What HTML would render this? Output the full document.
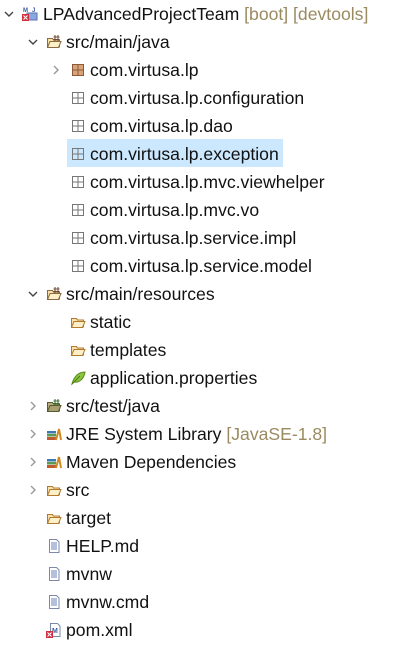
<!DOCTYPE html>
<html><head><style>
body{margin:0;width:409px;height:648px;background:#fff;overflow:hidden;font-family:"Liberation Sans",sans-serif;font-size:17.6px;color:#111;position:relative}
.r{position:absolute;height:28px;line-height:28px;white-space:nowrap}
.t{position:absolute;top:0}
.g{color:#9a8a60}
.ch{position:absolute;top:9px;width:10px;height:10px}
.ic{position:absolute;top:6px;width:16px;height:16px}
.hl{position:absolute;left:67px;top:139px;width:216px;height:28px;background:#cce8ff}
</style></head><body>
<div class="hl"></div>
<svg width="0" height="0" style="position:absolute">
<defs>
<symbol id="down" viewBox="0 0 10 10"><path d="M1 3 L5 7 L9 3" fill="none" stroke="#444" stroke-width="1.4"/></symbol>
<symbol id="right" viewBox="0 0 10 10"><path d="M3 1 L7 5 L3 9" fill="none" stroke="#999" stroke-width="1.4"/></symbol>
<symbol id="pkg" viewBox="0 0 16 16"><rect x="2.5" y="2.5" width="11" height="11" fill="none" stroke="#777"/><path d="M8 2.5V13.5M2.5 8H13.5" stroke="#777"/></symbol>
<symbol id="pkgf" viewBox="0 0 16 16"><rect x="2.5" y="2.5" width="11" height="11" fill="#d9a477" stroke="#8a5a3a"/><path d="M8 2.5V13.5M2.5 8H13.5" stroke="#8a5a3a"/></symbol>
<symbol id="fold" viewBox="0 0 16 16"><path d="M1.5 4.5h5l1 1.5h6v7h-12z" fill="#fbe2a8" stroke="#b07a30"/><path d="M1.5 13.5l2.5-6h11l-2.5 6z" fill="#fdf0c8" stroke="#b07a30"/></symbol>
<symbol id="sfold" viewBox="0 0 16 16"><path d="M1.5 4.5h5l1 1.5h6v7h-12z" fill="#fbe2a8" stroke="#8a6a40"/><path d="M1.5 13.5l2.5-6h11l-2.5 6z" fill="#fdf0c8" stroke="#8a6a40"/><path d="M9 1v6M12 1v6M7.5 3h6M7.5 5.5h6" stroke="#6a4a30"/></symbol>
<symbol id="tfold" viewBox="0 0 16 16"><path d="M1.5 4.5h5l1 1.5h6v7h-12z" fill="#b8b080" stroke="#5a5a30"/><path d="M1.5 13.5l2.5-6h11l-2.5 6z" fill="#a8a070" stroke="#5a5a30"/><path d="M9 1v6M12 1v6M7.5 3h6M7.5 5.5h6" stroke="#3a6a30"/></symbol>
<symbol id="lib" viewBox="0 0 16 16"><rect x="1" y="5" width="9" height="2.5" fill="#3a7ab0"/><rect x="1" y="8" width="9" height="2.5" fill="#5a9a50"/><rect x="1" y="11" width="9" height="3" fill="#c05a30"/><path d="M10 14L13 3l2 11" fill="none" stroke="#d08a20" stroke-width="2"/></symbol>
<symbol id="file" viewBox="0 0 16 16"><path d="M3.5 1.5h7l2.5 2.5v10.5h-9.5z" fill="#fff" stroke="#7a8aa8"/><path d="M5 5h6M5 7h6M5 9h6M5 11h6" stroke="#6a80b8"/></symbol>
<symbol id="leaf" viewBox="0 0 16 16"><path d="M2 14C4 6 9 2 15 2 14 9 9 13 4 12z" fill="#8cc63e" stroke="#5a8a20"/><path d="M2 14L10 6" stroke="#4a7a10"/></symbol>
<symbol id="pom" viewBox="0 0 16 16"><path d="M4.5 1.5h7l2.5 2.5v10.5h-9.5z" fill="#fff" stroke="#7a8aa8"/><text x="6" y="11" font-size="7" fill="#3a5aa0" font-family="Liberation Sans" font-weight="bold">M</text><rect x="0" y="9" width="7" height="7" fill="#d03040"/><path d="M1.5 10.5l4 4M5.5 10.5l-4 4" stroke="#fff"/></symbol>
<symbol id="proj" viewBox="0 0 16 16"><text x="1" y="6" font-size="6" fill="#3a5aa0" font-family="Liberation Sans" font-weight="bold">M</text><text x="10" y="6" font-size="6" fill="#3a5aa0" font-family="Liberation Sans" font-weight="bold">J</text><path d="M5 7h10v7h-10z" fill="#8aa8e0" stroke="#5a70b0"/><rect x="0" y="8" width="7" height="7" fill="#d03040"/><path d="M1.5 9.5l4 4M5.5 9.5l-4 4" stroke="#fff"/></symbol>
</defs></svg>

<div class="r" style="top:0"><svg class="ch" style="left:4px"><use href="#down"/></svg><svg class="ic" style="left:22px"><use href="#proj"/></svg><span class="t" style="left:43px">LPAdvancedProjectTeam <span class="g">[boot] [devtools]</span></span></div>
<div class="r" style="top:28px"><svg class="ch" style="left:28px"><use href="#down"/></svg><svg class="ic" style="left:46px"><use href="#sfold"/></svg><span class="t" style="left:66px">src/main/java</span></div>
<div class="r" style="top:56px"><svg class="ch" style="left:51px"><use href="#right"/></svg><svg class="ic" style="left:70px"><use href="#pkgf"/></svg><span class="t" style="left:90px">com.virtusa.lp</span></div>
<div class="r" style="top:84px"><svg class="ic" style="left:70px"><use href="#pkg"/></svg><span class="t" style="left:90px">com.virtusa.lp.configuration</span></div>
<div class="r" style="top:112px"><svg class="ic" style="left:70px"><use href="#pkg"/></svg><span class="t" style="left:90px">com.virtusa.lp.dao</span></div>
<div class="r" style="top:140px"><svg class="ic" style="left:70px"><use href="#pkg"/></svg><span class="t" style="left:90px">com.virtusa.lp.exception</span></div>
<div class="r" style="top:168px"><svg class="ic" style="left:70px"><use href="#pkg"/></svg><span class="t" style="left:90px">com.virtusa.lp.mvc.viewhelper</span></div>
<div class="r" style="top:196px"><svg class="ic" style="left:70px"><use href="#pkg"/></svg><span class="t" style="left:90px">com.virtusa.lp.mvc.vo</span></div>
<div class="r" style="top:224px"><svg class="ic" style="left:70px"><use href="#pkg"/></svg><span class="t" style="left:90px">com.virtusa.lp.service.impl</span></div>
<div class="r" style="top:252px"><svg class="ic" style="left:70px"><use href="#pkg"/></svg><span class="t" style="left:90px">com.virtusa.lp.service.model</span></div>
<div class="r" style="top:280px"><svg class="ch" style="left:28px"><use href="#down"/></svg><svg class="ic" style="left:46px"><use href="#sfold"/></svg><span class="t" style="left:66px">src/main/resources</span></div>
<div class="r" style="top:308px"><svg class="ic" style="left:70px"><use href="#fold"/></svg><span class="t" style="left:90px">static</span></div>
<div class="r" style="top:336px"><svg class="ic" style="left:70px"><use href="#fold"/></svg><span class="t" style="left:90px">templates</span></div>
<div class="r" style="top:364px"><svg class="ic" style="left:70px"><use href="#leaf"/></svg><span class="t" style="left:90px">application.properties</span></div>
<div class="r" style="top:392px"><svg class="ch" style="left:28px"><use href="#right"/></svg><svg class="ic" style="left:46px"><use href="#tfold"/></svg><span class="t" style="left:66px">src/test/java</span></div>
<div class="r" style="top:420px"><svg class="ch" style="left:28px"><use href="#right"/></svg><svg class="ic" style="left:46px"><use href="#lib"/></svg><span class="t" style="left:66px">JRE System Library <span class="g">[JavaSE-1.8]</span></span></div>
<div class="r" style="top:448px"><svg class="ch" style="left:28px"><use href="#right"/></svg><svg class="ic" style="left:46px"><use href="#lib"/></svg><span class="t" style="left:66px">Maven Dependencies</span></div>
<div class="r" style="top:476px"><svg class="ch" style="left:28px"><use href="#right"/></svg><svg class="ic" style="left:46px"><use href="#fold"/></svg><span class="t" style="left:66px">src</span></div>
<div class="r" style="top:504px"><svg class="ic" style="left:46px"><use href="#fold"/></svg><span class="t" style="left:66px">target</span></div>
<div class="r" style="top:532px"><svg class="ic" style="left:46px"><use href="#file"/></svg><span class="t" style="left:66px">HELP.md</span></div>
<div class="r" style="top:560px"><svg class="ic" style="left:46px"><use href="#file"/></svg><span class="t" style="left:66px">mvnw</span></div>
<div class="r" style="top:588px"><svg class="ic" style="left:46px"><use href="#file"/></svg><span class="t" style="left:66px">mvnw.cmd</span></div>
<div class="r" style="top:616px"><svg class="ic" style="left:46px"><use href="#pom"/></svg><span class="t" style="left:66px">pom.xml</span></div>
</body></html>
